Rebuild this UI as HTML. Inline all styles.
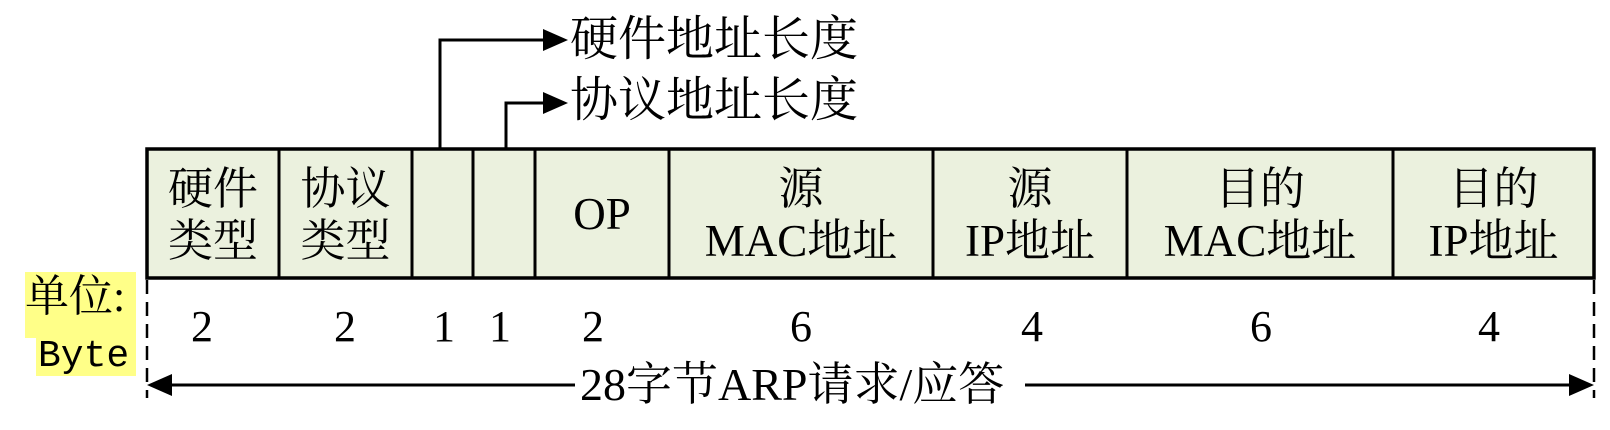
<!DOCTYPE html>
<html><head><meta charset="utf-8"><style>
html,body{margin:0;padding:0;background:#fff;}
body{width:1610px;height:430px;position:relative;overflow:hidden;font-family:"Liberation Serif","Noto Serif CJK SC",serif;color:#000;}
.c{position:absolute;text-align:center;font-size:45px;line-height:52px;}
.t{position:absolute;white-space:nowrap;font-size:42px;line-height:46px;}
.n{position:absolute;width:60px;margin-left:-30px;text-align:center;font-size:44px;line-height:46px;top:304px;}
</style></head><body>
<svg width="1610" height="430" style="position:absolute;left:0;top:0">
<rect x="25" y="272" width="111" height="66" fill="#ffff88"/>
<rect x="36" y="336" width="100" height="40" fill="#ffff88"/>
<rect x="147" y="149" width="1447" height="129" fill="#ebf1de" stroke="#000" stroke-width="3.5"/>
<g stroke="#000" stroke-width="3">
<line x1="279" y1="149" x2="279" y2="278"/><line x1="412" y1="149" x2="412" y2="278"/>
<line x1="473" y1="149" x2="473" y2="278"/><line x1="535" y1="149" x2="535" y2="278"/>
<line x1="669" y1="149" x2="669" y2="278"/><line x1="933" y1="149" x2="933" y2="278"/>
<line x1="1127" y1="149" x2="1127" y2="278"/><line x1="1393" y1="149" x2="1393" y2="278"/>
</g>
<g stroke="#000" stroke-width="2.5" stroke-dasharray="14,8" fill="none">
<line x1="147" y1="280" x2="147" y2="398"/><line x1="1594" y1="280" x2="1594" y2="398"/>
</g>
<g stroke="#000" stroke-width="3" fill="none">
<path d="M440,149 V40 H545"/><path d="M506,149 V103 H545"/>
<line x1="165" y1="385" x2="575" y2="385"/><line x1="1025" y1="385" x2="1575" y2="385"/>
</g>
<g fill="#000">
<path d="M543,29 L568,40 L543,51z"/><path d="M543,92 L568,103 L543,114z"/>
<path d="M147,385 L172,374 L172,396z"/><path d="M1594,385 L1569,374 L1569,396z"/>
</g>
</svg>
<div class="t" style="left:570px;top:17px;font-size:48px">硬件地址长度</div>
<div class="t" style="left:570px;top:78px;font-size:48px">协议地址长度</div>
<div class="c" style="left:147px;width:132px;top:163px">硬件<br>类型</div>
<div class="c" style="left:279px;width:133px;top:163px">协议<br>类型</div>
<div class="c" style="left:535px;width:134px;top:188px">OP</div>
<div class="c" style="left:669px;width:264px;top:163px">源<br>MAC地址</div>
<div class="c" style="left:933px;width:194px;top:163px">源<br>IP地址</div>
<div class="c" style="left:1127px;width:266px;top:163px">目的<br>MAC地址</div>
<div class="c" style="left:1393px;width:201px;top:163px">目的<br>IP地址</div>
<div class="t" style="left:25px;top:274px;font-size:44px">单位:</div>
<div class="t" style="left:38px;top:334px;font-family:'Liberation Mono',monospace;font-size:38px">Byte</div>
<div class="n" style="left:202px">2</div>
<div class="n" style="left:345px">2</div>
<div class="n" style="left:444px">1</div>
<div class="n" style="left:500px">1</div>
<div class="n" style="left:593px">2</div>
<div class="n" style="left:801px">6</div>
<div class="n" style="left:1032px">4</div>
<div class="n" style="left:1261px">6</div>
<div class="n" style="left:1489px">4</div>
<div class="t" style="left:580px;top:362px;font-size:46px">28字节ARP请求/应答</div>
</body></html>
